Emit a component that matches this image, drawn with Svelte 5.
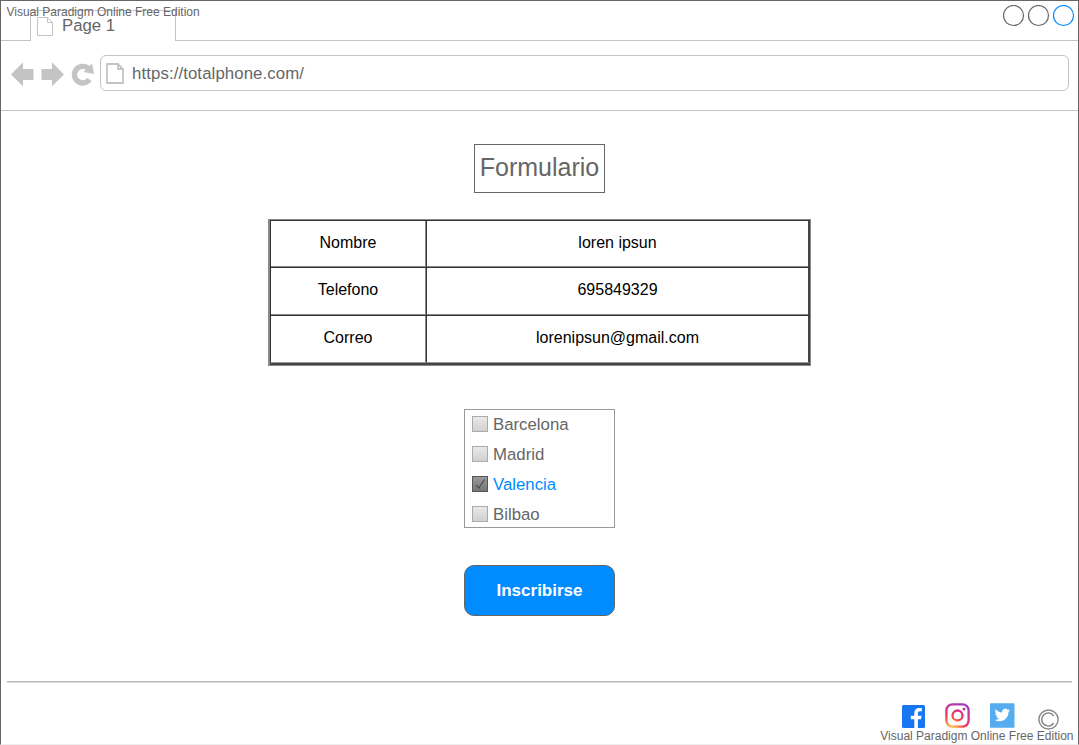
<script>
  const rows = [
    { label: 'Nombre', value: 'loren ipsun' },
    { label: 'Telefono', value: '695849329' },
    { label: 'Correo', value: 'lorenipsun@gmail.com' }
  ];
  let cities = $state([
    { name: 'Barcelona', checked: false },
    { name: 'Madrid', checked: false },
    { name: 'Valencia', checked: true },
    { name: 'Bilbao', checked: false }
  ]);
</script>

<div class="window">
  <header class="tabs">
    <div class="gap"></div>
    <div class="tab">
      <svg width="16" height="20" viewBox="0 0 16 20" fill="none" stroke="#c4c4c4">
        <path d="M.5.5h10l5 5v13H.5zM10.500.5V5.500h5" />
      </svg>
      <span>Page 1</span>
    </div>
    <div class="controls">
      <svg width="72" height="22" viewBox="0 0 72 22" fill="none" stroke="#666" stroke-width="1.200">
        <circle cx="10.500" cy="10.500" r="10" /><circle cx="35.500" cy="10.500" r="10" /><circle cx="60.500" cy="10.500" r="10" stroke="#008cff" />
      </svg>
    </div>
  </header>

  <nav class="toolbar">
    <svg class="nav" width="84" height="26" viewBox="0 0 84 26" fill="#c4c4c4">
      <path d="M0 13.500 12 1.200v6.800h10.500v11H12v6.300z" />
      <path d="M53 13.500 41 1.200v6.800H30.500v11H41v6.300z" />
      <path d="M77 7.200A8.300 8.300 0 1 0 78.500 18.500" fill="none" stroke="#c4c4c4" stroke-width="5.400" />
      <path d="M81 2.500 83 13 72.500 11z" />
    </svg>
    <div class="address">
      <svg width="18" height="21" viewBox="0 0 18 21" fill="none" stroke="#c4c4c4" stroke-width="1.800">
        <path d="M1 1h11l5 5v14H1zM12 1v5h5" />
      </svg>
      <span>https://totalphone.com/</span>
    </div>
  </nav>

  <main>
    <h1>Formulario</h1>
    <div class="table">
      {#each rows as row}
        <div class="row">
          <div class="cell label">{row.label}</div>
          <div class="cell value">{row.value}</div>
        </div>
      {/each}
    </div>
    <div class="list">
      {#each cities as city}
        <button class="option" class:checked={city.checked} onclick={() => (city.checked = !city.checked)}>
          <span class="box">
            {#if city.checked}
              <svg width="14" height="14" viewBox="0 0 14 14" fill="none" stroke="#444" stroke-width="1.100"><path d="m3.200 8.200 2.500 3L11.500 2.500" /></svg>
            {/if}
          </span>
          <span>{city.name}</span>
        </button>
      {/each}
    </div>
    <button class="submit">Inscribirse</button>
  </main>

  <footer>
    <svg class="facebook" width="23" height="23" viewBox="0 0 23 23">
      <rect width="23" height="23" rx="1.500" fill="#1777f2" />
      <path fill="#fff" d="M12.300 23v-8.700H8.800v-3.500h3.500V8.200c0-3.500 2-5.300 5-5.300.9 0 1.800.1 2.500.2v3.200h-1.700c-1.700 0-2.200.9-2.200 2v2.500h3.700l-.6 3.500h-3.100V23z" />
    </svg>
    <svg class="instagram" width="25" height="25" viewBox="0 0 25 25" fill="none">
      <defs>
        <radialGradient id="insta" cx="6" cy="26" r="27" gradientUnits="userSpaceOnUse">
          <stop stop-color="#ffd34f" /><stop offset=".25" stop-color="#fb9140" /><stop offset=".5" stop-color="#f33b54" /><stop offset=".78" stop-color="#d72f8e" /><stop offset="1" stop-color="#a23bc0" />
        </radialGradient>
      </defs>
      <g stroke="url(#insta)" stroke-width="2.300">
        <rect x="1.400" y="1.400" width="22.200" height="22.200" rx="6" />
        <circle cx="12.500" cy="12.500" r="5" />
      </g>
      <circle cx="19" cy="6" r="1.500" fill="#c6309e" />
    </svg>
    <svg class="twitter" width="25" height="25" viewBox="0 0 25 25">
      <rect y=".3" width="24.500" height="24.500" rx=".7" fill="#55acee" />
      <path fill="#fff" transform="translate(4.500 4.200) scale(.65)" d="M23.950 4.570a10 10 0 0 1-2.820.77 4.960 4.960 0 0 0 2.160-2.720c-.95.55-2 .95-3.120 1.180a4.920 4.920 0 0 0-8.380 4.480C7.690 8.090 4.070 6.130 1.640 3.160a4.820 4.820 0 0 0-.67 2.480c0 1.710.87 3.210 2.190 4.100a4.900 4.900 0 0 1-2.230-.62v.06a4.920 4.920 0 0 0 3.950 4.830 5 5 0 0 1-2.210.08 4.940 4.940 0 0 0 4.600 3.420A9.870 9.870 0 0 1 0 19.540a13.990 13.990 0 0 0 7.550 2.210c9.050 0 14-7.500 14-13.980 0-.21 0-.42-.02-.63a9.940 9.940 0 0 0 2.460-2.550z" />
    </svg>
    <svg class="copyright" width="21" height="21" viewBox="0 0 21 21" fill="none" stroke="#8c8c8c">
      <circle cx="10.500" cy="10.500" r="9.600" stroke-width="1.500" />
      <path d="M15.700 14A6.500 6.500 0 1 1 15.700 7" stroke-width="1.600" />
    </svg>
  </footer>
  <span class="mark top">Visual Paradigm Online Free Edition</span>
  <span class="mark bottom">Visual Paradigm Online Free Edition</span>
</div>

<style>
  :global(body) { margin: 0; background: #fff; }
  .window {
    box-sizing: border-box;
    position: relative;
    display: flex;
    flex-direction: column;
    width: 1079px;
    height: 745px;
    overflow: hidden;
    border: 1px solid #666;
    border-bottom-color: #eee;
    background: #fff;
    color: #666;
    font: 16.8px/20px "Liberation Sans", Arial, sans-serif;
  }
  .window * { box-sizing: border-box; }
  svg { display: block; flex: none; }
  button { font: inherit; color: inherit; margin: 0; cursor: pointer; }
  .tabs { display: flex; height: 40px; }
  .gap { width: 29px; border-bottom: 1px solid #c4c4c4; }
  .tab {
    display: flex;
    gap: 9px;
    width: 146px;
    height: 31px;
    margin-top: 9px;
    padding: 6px 0 0 6px;
    border: solid #c4c4c4;
    border-width: 1px 1px 0;
  }
  .tab span { margin-top: -1px; }
  .controls { display: flex; flex: 1; justify-content: flex-end; padding: 4px 3px 0 0; border-bottom: 1px solid #c4c4c4; }
  .toolbar { display: flex; height: 70px; padding: 14px 9px 0 10px; border-bottom: 1px solid #c4c4c4; }
  .nav { margin-top: 6px; }
  .address { display: flex; align-items: center; gap: 8px; flex: 1; height: 36px; margin-left: 5px; padding-left: 5px; border: 1px solid #c4c4c4; border-radius: 6px; }
  .address span { padding-top: 1px; letter-spacing: .1px; }
  main { display: flex; flex-direction: column; align-items: center; height: 570px; padding-top: 33px; }
  h1 { width: 131px; height: 49px; margin: 0; border: 1px solid #666; font-size: 25px; font-weight: 400; line-height: 45px; text-align: center; white-space: nowrap; }
  .table { width: 543px; margin-top: 26px; border: solid #888; border-width: 1px 1px 1px 2px; color: #000; font-size: 16px; }
  .row { display: flex; height: 48px; border-top: 1px solid #333; }
  .row:first-child { height: 47px; }
  .row + .row { box-shadow: 0 -1px #888; }
  .row:last-child { height: 50px; border-bottom: 2px solid #444; }
  .cell { padding-top: 12px; text-align: center; line-height: 20px; }
  .label { width: 156px; padding-right: 1px; border-left: 1px solid #333; }
  .value { flex: 1; border-left: 1px solid #333; border-right: 2px solid #444; box-shadow: -1px 0 #888; }
  .row:last-child .cell { border-bottom: 1px solid #999; }
  .list { width: 151px; height: 119px; margin-top: 43px; border: 1px solid #999; overflow: hidden; }
  .option { display: flex; align-items: center; gap: 5px; width: 100%; height: 30px; padding: 0 0 0 7px; border: 0; background: none; }
  .option.checked { color: #008cff; }
  .box { width: 16px; height: 16px; margin-bottom: 2px; border: 1px solid #aaa; background: linear-gradient(#e9e9e9, #d0d0d0); }
  .checked .box { border-color: #555; background: linear-gradient(#999, #777); }
  .submit { width: 151px; height: 51px; margin-top: 37px; padding: 0; border: 1px solid #666; border-radius: 10px; background: #008cff; color: #fff; font-size: 17px; font-weight: 700; }
  footer { display: flex; align-items: flex-start; justify-content: flex-end; height: 63px; margin: 0 6px; padding: 21px 13px 0 0; border-top: 1px solid #b8b8b8; box-shadow: inset 0 1px #ddd; }
  .facebook { margin-top: 2px; }
  .instagram { margin-left: 20px; }
  .twitter { margin-left: 20px; }
  .copyright { margin: 6px 0 0 23px; }
  .mark { position: absolute; font-size: 12px; line-height: 14px; white-space: nowrap; }
  .top { left: 5.500px; top: 4px; }
  .bottom { right: 4.500px; bottom: 1px; }
</style>
